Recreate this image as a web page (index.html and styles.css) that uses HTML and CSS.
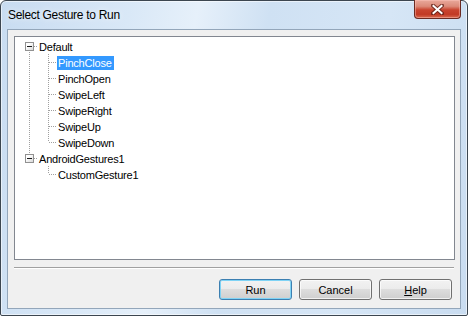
FILE: index.html
```html
<!DOCTYPE html>
<html lang="en">

<head>
    <link rel="stylesheet" href="styles.css">
</head>

<body>
    <div class="window">
        <div class="titlebar">
            <span class="title">Select Gesture to Run</span>
            <div class="close-btn">
                <svg width="13" height="11" viewBox="0 0 13 11">
                    <path d="M2 1.5 L11 9.5 M11 1.5 L2 9.5" stroke="#5a1e16" stroke-width="4" stroke-linecap="square" opacity="0.75"/>
                    <path d="M2.5 2 L10.5 9 M10.5 2 L2.5 9" stroke="#ffffff" stroke-width="2" stroke-linecap="square"/>
                </svg>
            </div>
        </div>
        <div class="client">
            <!-- gesture tree -->
            <div class="tree-box">
                <ul class="tree">
                    <li>
                        <div class="row"><span class="cell"><span class="toggle"></span></span><span class="label">Default</span></div>
                        <ul>
                            <li><div class="row"><span class="cell"></span><span class="label selected">PinchClose</span></div></li>
                            <li><div class="row"><span class="cell"></span><span class="label">PinchOpen</span></div></li>
                            <li><div class="row"><span class="cell"></span><span class="label">SwipeLeft</span></div></li>
                            <li><div class="row"><span class="cell"></span><span class="label">SwipeRight</span></div></li>
                            <li><div class="row"><span class="cell"></span><span class="label">SwipeUp</span></div></li>
                            <li><div class="row"><span class="cell"></span><span class="label">SwipeDown</span></div></li>
                        </ul>
                    </li>
                    <li>
                        <div class="row"><span class="cell"><span class="toggle"></span></span><span class="label">AndroidGestures1</span></div>
                        <ul>
                            <li><div class="row"><span class="cell"></span><span class="label">CustomGesture1</span></div></li>
                        </ul>
                    </li>
                </ul>
            </div>
            <div class="separator"></div>
            <div class="buttons">
                <button class="btn default">Run</button>
                <button class="btn">Cancel</button>
                <button class="btn"><u>H</u>elp</button>
            </div>
        </div>
    </div>
</body>

</html>
```

FILE: styles.css
```css
body {
    margin: 0;
    background: #ffffff;
    font-family: "Liberation Sans", Arial, sans-serif;
}

.window {
    width: 468px;
    height: 316px;
    box-sizing: border-box;
    border: 1px solid #3c4650;
    border-radius: 6px 6px 2px 2px;
    padding: 0 6px 6px 6px;
    display: flex;
    flex-direction: column;
    background: linear-gradient(100deg, #c8dcf1 0%, #d9e8f7 25%, #e6f0fa 38%, #cfe1f3 52%, #d6e6f6 75%, #c9dcf0 100%);
    box-shadow: inset 0 0 0 1px rgba(255, 255, 255, 0.55);
}

.titlebar {
    height: 28px;
    display: flex;
    align-items: flex-start;
    justify-content: space-between;
}

.title {
    margin: 7px 0 0 1px;
    font-size: 12px;
    letter-spacing: -0.3px;
    color: #000;
    text-shadow: 0 0 6px rgba(255, 255, 255, 0.9);
}

.close-btn {
    width: 47px;
    height: 19px;
    margin: -1px 0 0 0;
    box-sizing: border-box;
    border: 1px solid #6b2a22;
    border-top: none;
    border-radius: 0 0 4px 4px;
    background: linear-gradient(to bottom, #e9a99b 0%, #dc8a79 35%, #c9442f 55%, #c23a25 80%, #d86a50 100%);
    box-shadow: inset 0 0 0 1px rgba(255, 200, 190, 0.45);
    display: flex;
    align-items: center;
    justify-content: center;
}

.client {
    flex: 1;
    border: 1px solid #93a6ba;
    background: #f0f0f0;
    display: flex;
    flex-direction: column;
}

.tree-box {
    margin: 6px 5px 0 6px;
    height: 224px;
    box-sizing: border-box;
    border: 1px solid #828790;
    background: #ffffff;
    font-size: 11px;
    letter-spacing: -0.2px;
    color: #000;
}

.tree, .tree ul {
    list-style: none;
    margin: 0;
    padding: 0;
}

.tree {
    padding-top: 1px;
}

.tree ul {
    padding-left: 19px;
}

.tree li {
    position: relative;
}

/* dotted connector lines */
.tree li::before,
.tree li:not(:last-child)::after {
    content: "";
    position: absolute;
    left: 14px;
    width: 1px;
    background: repeating-linear-gradient(to bottom, #a0a0a0 0 1px, transparent 1px 2px);
}

.tree li::before {
    top: 0;
    height: 8px;
}

.tree > li:first-child::before {
    display: none;
}

.tree li:not(:last-child)::after {
    top: 8px;
    bottom: 0;
}

.row {
    height: 16px;
    display: flex;
    align-items: flex-end;
}

.cell {
    position: relative;
    width: 16px;
    height: 16px;
    margin-left: 7px;
    display: flex;
    align-items: center;
}

.cell::after {
    content: "";
    position: absolute;
    left: 8px;
    right: 0;
    top: 8px;
    height: 1px;
    background: repeating-linear-gradient(to right, #a0a0a0 0 1px, transparent 1px 2px);
}

.toggle {
    position: relative;
    z-index: 1;
    width: 9px;
    height: 9px;
    margin: 1px 0 0 3px;
    box-sizing: border-box;
    border: 1px solid #919191;
    background: linear-gradient(to bottom right, #ffffff 30%, #d8d8d8);
}

.toggle::after {
    content: "";
    position: absolute;
    left: 1px;
    top: 3px;
    width: 5px;
    height: 1px;
    background: #1a1a1a;
}

.label {
    height: 14px;
    line-height: 14px;
    padding: 0 2px 0 1px;
    white-space: nowrap;
}

.label.selected {
    background: #3399ff;
    color: #ffffff;
}

.separator {
    margin: 7px 6px 0 6px;
    height: 1px;
    border-top: 1px solid #a0a0a0;
    background: #ffffff;
}

.buttons {
    display: flex;
    justify-content: flex-end;
    gap: 7px;
    padding: 10px 8px 0 0;
}

.btn {
    width: 73px;
    height: 21px;
    padding: 0;
    border: 1px solid #707070;
    border-radius: 3px;
    background: linear-gradient(to bottom, #f2f2f2 0%, #ebebeb 50%, #dddddd 50%, #cfcfcf 100%);
    box-shadow: inset 0 0 0 1px rgba(255, 255, 255, 0.7);
    font-family: "Liberation Sans", Arial, sans-serif;
    font-size: 11px;
    color: #000;
}

.btn.default {
    border-color: #3c7fb1;
    box-shadow: inset 0 0 0 1px #7fd3f5;
}
```
